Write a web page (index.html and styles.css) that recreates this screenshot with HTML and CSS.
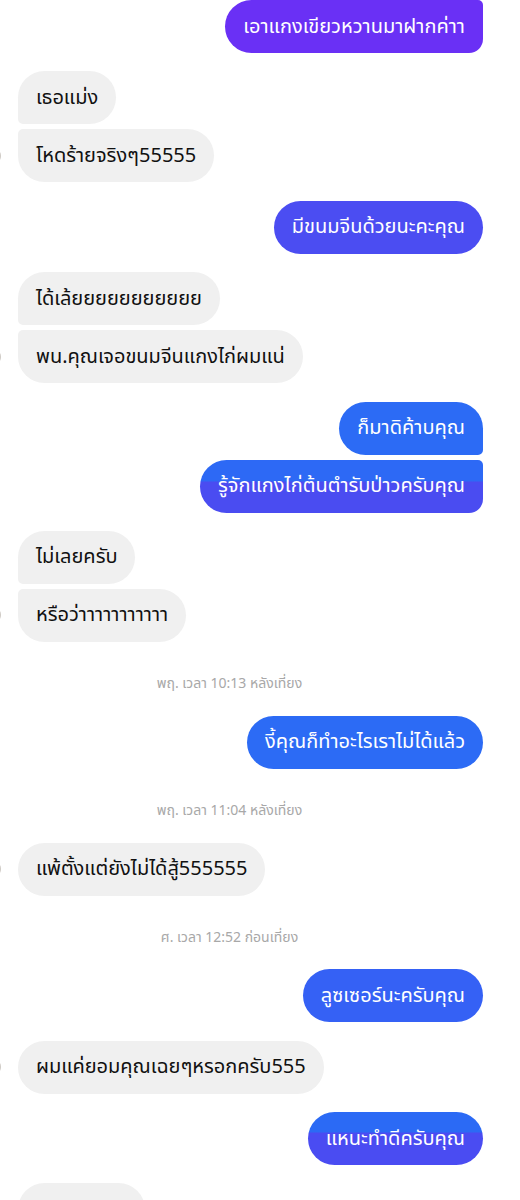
FILE: index.html
```html
<!DOCTYPE html>
<html lang="th">
<head>
<meta charset="utf-8">
<link rel="stylesheet" href="styles.css">
</head>
<body>
<div class="chat">
  <div class="group out">
    <div class="bubble purple">เอาแกงเขียวหวานมาฝากค่าา</div>
  </div>
  <div class="group in">
    <div class="bubble first">เธอแม่ง</div>
    <div class="bubble last">โหดร้ายจริงๆ55555<span class="avatar"></span></div>
  </div>
  <div class="group out">
    <div class="bubble violet">มีขนมจีนด้วยนะคะคุณ</div>
  </div>
  <div class="group in">
    <div class="bubble first">ได้เล้ยยยยยยยยยยย</div>
    <div class="bubble last">พน.คุณเจอขนมจีนแกงไก่ผมแน่<span class="avatar"></span></div>
  </div>
  <div class="group out">
    <div class="bubble blue first">ก็มาดิค้าบคุณ</div>
    <div class="bubble split last">รู้จักแกงไก่ต้นตำรับป่าวครับคุณ</div>
  </div>
  <div class="group in">
    <div class="bubble first">ไม่เลยครับ</div>
    <div class="bubble last">หรือว่าาาาาาาาาาา<span class="avatar"></span></div>
  </div>
  <div class="stamp">พฤ. เวลา 10:13 หลังเที่ยง</div>
  <div class="group out">
    <div class="bubble blue">งี้คุณก็ทำอะไรเราไม่ได้แล้ว</div>
  </div>
  <div class="stamp">พฤ. เวลา 11:04 หลังเที่ยง</div>
  <div class="group in">
    <div class="bubble">แพ้ตั้งแต่ยังไม่ได้สู้555555<span class="avatar"></span></div>
  </div>
  <div class="stamp">ศ. เวลา 12:52 ก่อนเที่ยง</div>
  <div class="group out">
    <div class="bubble blue2">ลูซเซอร์นะครับคุณ</div>
  </div>
  <div class="group in">
    <div class="bubble">ผมแค่ยอมคุณเฉยๆหรอกครับ555<span class="avatar"></span></div>
  </div>
  <div class="group out">
    <div class="bubble split2">แหนะทำดีครับคุณ</div>
  </div>
  <div class="group in">
    <div class="bubble stub"></div>
  </div>
</div>
</body>
</html>
```
FILE: styles.css
```css
html, body {
  margin: 0;
  padding: 0;
  background: #ffffff;
}
body {
  width: 520px;
  height: 1200px;
  overflow: hidden;
  font-family: "Noto Sans", "Noto Sans Thai", sans-serif;
}
.chat {
  display: flex;
  flex-direction: column;
  gap: 18.4px;
  padding: 0 37px 0 18px;
}
.group {
  display: flex;
  flex-direction: column;
  gap: 5px;
}
.group.in { align-items: flex-start; }
.group.out { align-items: flex-end; }
.bubble {
  position: relative;
  height: 53px;
  box-sizing: border-box;
  display: flex;
  align-items: center;
  padding: 0 18px;
  border-radius: 26.5px;
  font-size: 20px;
  color: #111111;
  background: #f0f0f0;
  white-space: nowrap;
}
.bubble.stub { width: 127px; }
.in .bubble.first { border-bottom-left-radius: 5px; }
.in .bubble.last { border-top-left-radius: 5px; }
.out .bubble { color: #ffffff; background: #2c6bf5; }
.out .bubble.first { border-bottom-right-radius: 5px; }
.out .bubble.last { border-top-right-radius: 5px; border-bottom-right-radius: 14px; }
.out .bubble.purple { background: #6a30f5; border-top-right-radius: 5px; border-bottom-right-radius: 14px; }
.out .bubble.violet { background: #4b4df2; }
.out .bubble.blue2 { background: #3561f5; }
.out .bubble.split { background: linear-gradient(#2d69f5 0, #2d69f5 21px, #4a4cf1 22px, #4a4cf1 100%); }
.out .bubble.split2 { background: linear-gradient(#2b6af5 0, #2b6af5 20px, #4a4cf2 21px, #4a4cf2 100%); }
.avatar {
  position: absolute;
  left: -33px;
  top: 50%;
  width: 16px;
  height: 16px;
  margin-top: -8px;
  border-radius: 50%;
  background: #cfcac4;
}
.stamp {
  margin: 13px 0 4px 0;
  height: 20px;
  line-height: 20px;
  padding-right: 42px;
  text-align: center;
  font-size: 14px;
  color: #a8a8a8;
}
```
